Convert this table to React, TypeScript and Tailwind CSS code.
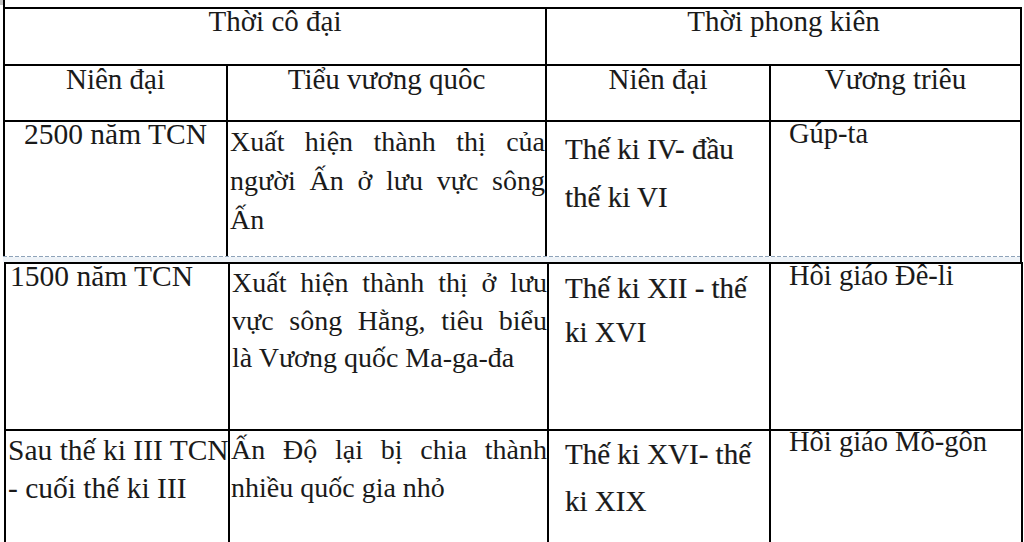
import React from "react";

const J = ({ children }: { children: React.ReactNode }) => (
  <span className="block whitespace-nowrap [text-align-last:justify] text-justify">{children}</span>
);
const L = ({ children }: { children: React.ReactNode }) => (
  <span className="block whitespace-nowrap">{children}</span>
);

export default function App() {
  const cell = "border-r-2 border-black";
  const h = "text-[29px] text-center leading-[24px]";
  const c1 = "text-[29.5px]";
  const c3 = "text-[29px] [-webkit-text-stroke:0.2px_#1a1a1a]";
  const c4 = "text-[28.5px]";
  return (
    <div className="relative w-[1024px] h-[542px] overflow-hidden bg-white text-[#1a1a1a] text-[28px] font-['Liberation_Serif','Times_New_Roman',serif]">
      <div className="absolute left-0 top-0 w-[3px] h-[5px] bg-[#c4c4c4]" />
      <div className="ml-[3px] h-[7px] border-l-2 border-black" />

      {/* upper part */}
      <div className="ml-[3px] w-[1019px] border-t-2 border-black">
        <div className="grid grid-cols-[544px_475px] h-[57px] border-b-2 border-black">
          <div className={`${cell} border-l-2 ${h}`}>Thời cô đại</div>
          <div className={`${cell} ${h}`}>Thời phong kiên</div>
        </div>
        <div className="grid grid-cols-[225px_319px_224px_251px] h-[56px] border-b-2 border-black">
          <div className={`${cell} border-l-2 ${h} pt-[1px]`}>Niên đại</div>
          <div className={`${cell} ${h} pt-[1px]`}>Tiểu vương quôc</div>
          <div className={`${cell} ${h} pt-[1px]`}>Niên đại</div>
          <div className={`${cell} ${h} pt-[1px]`}>Vương triêu</div>
        </div>
        <div className="grid grid-cols-[225px_319px_224px_251px] h-[134px]">
          <div className={`${cell} border-l-2 text-center leading-[24px] ${c1}`}>2500 năm TCN</div>
          <div className={`${cell} pl-[2px] leading-[39px]`}>
            <J>Xuất hiện thành thị của</J>
            <J>người Ấn ở lưu vực sông</J>
            <L>Ấn</L>
          </div>
          <div className={`${cell} pl-[18px] pt-[3px] leading-[48px] ${c3}`}>
            <L>Thế ki IV- đầu</L>
            <L>thế ki VI</L>
          </div>
          <div className={`${cell} pl-[18px] leading-[24px] ${c4}`}>Gúp-ta</div>
        </div>
      </div>

      {/* page break marker */}
      <div className="ml-[3px] w-[1019px] border-r-2 border-black">
        <div className="h-[1px] bg-[repeating-linear-gradient(90deg,#8ea3b9_0_4px,transparent_4px_6px)]" />
        <div className="h-[5px] bg-[#eef3f8]" />
      </div>

      {/* lower part */}
      <div className="ml-[4px] w-[1019px] border-t-2 border-black">
        <div className="grid grid-cols-[226px_319px_222px_252px] h-[167px] border-b-2 border-black">
          <div className={`${cell} border-l-2 pl-[4px] leading-[24px] ${c1}`}>1500 năm TCN</div>
          <div className={`${cell} pl-[2px] leading-[37.5px]`}>
            <J>Xuất hiện thành thị ở lưu</J>
            <J>vực sông Hằng, tiêu biểu</J>
            <L>là Vương quốc Ma-ga-đa</L>
          </div>
          <div className={`${cell} pl-[16px] pt-[2px] leading-[44px] ${c3}`}>
            <L>Thế ki XII - thế</L>
            <L>ki XVI</L>
          </div>
          <div className={`${cell} pl-[18px] leading-[24px] ${c4}`}>Hôi giáo Đê-li</div>
        </div>
        <div className="grid grid-cols-[226px_319px_222px_252px] h-[111px]">
          <div className={`${cell} border-l-2 pl-[2px] leading-[38px] ${c1}`}>
            <L>Sau thế ki III TCN</L>
            <L>- cuối thế ki III</L>
          </div>
          <div className={`${cell} pl-[1px] leading-[38px]`}>
            <J>Ấn Độ lại bị chia thành</J>
            <L>nhiều quốc gia nhỏ</L>
          </div>
          <div className={`${cell} pl-[16px] leading-[47px] ${c3}`}>
            <L>Thế ki XVI- thế</L>
            <L>ki XIX</L>
          </div>
          <div className={`${cell} pl-[18px] leading-[22px] ${c4}`}>Hôi giáo Mô-gôn</div>
        </div>
      </div>
    </div>
  );
}
